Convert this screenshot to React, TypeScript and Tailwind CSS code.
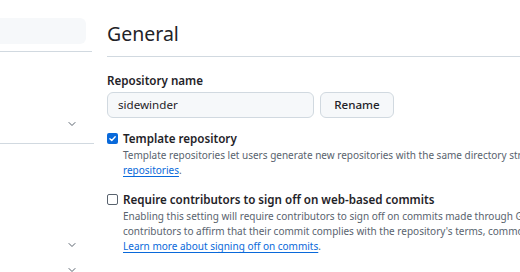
import { ChevronDown } from "lucide-react"

const Chevron = () => <ChevronDown className="h-[12px] w-[12px] text-[#59636e]" strokeWidth={2} />

const Checkbox = ({ checked }: { checked?: boolean }) =>
  checked ? (
    <div className="mt-[3px] flex h-[11px] w-[11px] shrink-0 items-center justify-center rounded-[2px] bg-[#0969da]">
      <svg viewBox="0 0 12 12" className="h-[9px] w-[9px]">
        <path d="M2.5 6.2 5 8.6 9.6 3.6" fill="none" stroke="#fff" strokeWidth="1.8" strokeLinecap="round" strokeLinejoin="round" />
      </svg>
    </div>
  ) : (
    <div className="mt-[3px] h-[11px] w-[11px] shrink-0 rounded-[2px] border border-[#59636e] bg-white" />
  )

const App = () => {
  return (
    <div className="flex h-[272px] w-[520px] overflow-hidden bg-white text-[#1f2328]" style={{ fontFamily: "'Noto Sans', sans-serif" }}>
      {/* sidebar, cut off on the left */}
      <aside className="w-[92px] shrink-0">
        <div className="mt-[18px] h-[26px] w-[86px] rounded-r-md bg-[#f6f8fa]" />
        <div className="mt-[7px] h-px w-[92px] bg-[#d1d9e0]" />
        <div className="flex h-[91px] items-end justify-end pr-[14px] pb-[13px]">
          <Chevron />
        </div>
        <div className="h-px w-[94px] bg-[#d1d9e0]" />
        <div className="flex h-[107px] items-end justify-end pr-[14px]">
          <Chevron />
        </div>
        <div className="flex h-[25px] items-end justify-end pr-[14px]">
          <Chevron />
        </div>
      </aside>

      <main className="ml-[15px] w-[700px] shrink-0">
        <h2 className="mt-[19px] border-b border-[#d1d9e0] pb-[7px] text-[19.5px] leading-[30px]">General</h2>

        <div className="mt-[15px] text-[11.6px] font-semibold leading-[17px]">Repository name</div>
        <div className="mt-[3px] flex gap-[6px]">
          <div className="flex h-[26px] w-[207px] items-center rounded-[6px] border border-[#d1d9e0] bg-[#f6f8fa] px-[10px] text-[11.6px]">
            sidewinder
          </div>
          <button className="h-[26px] w-[74px] rounded-[6px] border border-[#d1d9e0] bg-[#f6f8fa] text-[11.6px] font-medium">
            Rename
          </button>
        </div>

        <div className="mt-[12px] flex gap-[5px]">
          <Checkbox checked />
          <div>
            <div className="text-[11.6px] font-semibold leading-[18px]">Template repository</div>
            <p className="whitespace-nowrap text-[10px] leading-[15px] text-[#59636e]">
              Template repositories let users generate new repositories with the same directory structure and files. Learn more about template
              <br />
              <a className="text-[#0969da] underline underline-offset-2">repositories</a>.
            </p>
          </div>
        </div>

        <div className="mt-[13px] flex gap-[5px]">
          <Checkbox />
          <div>
            <div className="text-[11.6px] font-semibold leading-[18px]">Require contributors to sign off on web-based commits</div>
            <p className="whitespace-nowrap text-[10px] leading-[15px] text-[#59636e]">
              Enabling this setting will require contributors to sign off on commits made through GitHub's web interface. Signing off is a way for
              <br />
              contributors to affirm that their commit complies with the repository's terms, commonly the Developer Certificate of Origin.
              <br />
              <a className="text-[#0969da] underline underline-offset-2">Learn more about signing off on commits</a>.
            </p>
          </div>
        </div>
      </main>
    </div>
  )
}

export default App
